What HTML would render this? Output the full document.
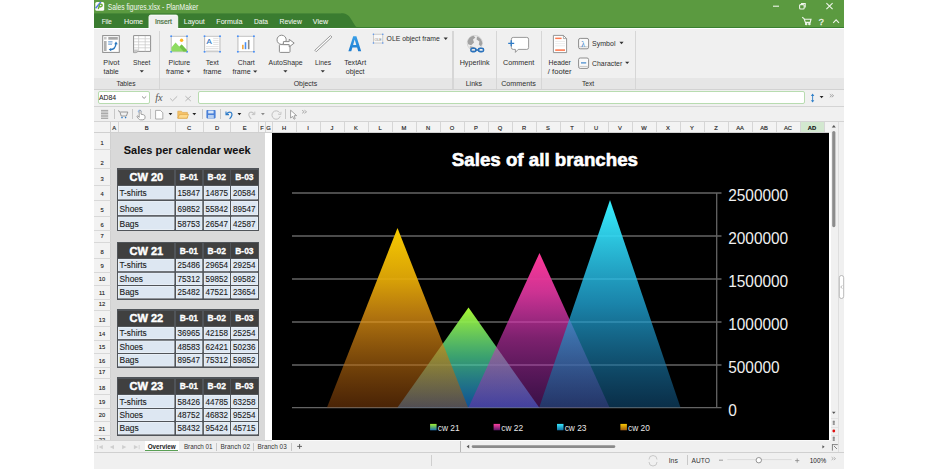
<!DOCTYPE html>
<html><head><meta charset="utf-8"><style>
*{margin:0;padding:0;box-sizing:border-box}
html,body{width:938px;height:469px;overflow:hidden;background:#fff}
body{position:relative;font-family:"Liberation Sans",sans-serif}
.a{position:absolute}
svg{position:absolute;overflow:visible}
</style></head><body>
<div class="a" style="left:94px;top:0px;width:750px;height:28px;background:#5b9a40"></div>
<div class="a" style="left:94px;top:27.0px;width:750px;height:1.1px;background:#3a8030"></div>
<div class="a" style="left:94px;top:28px;width:750px;height:62px;background:#f0f0f0"></div>
<div class="a" style="left:94px;top:28.1px;width:750px;height:1.2px;background:#ffffff"></div>
<div class="a" style="left:94px;top:78.4px;width:750px;height:10.2px;background:#e6e6e6"></div>
<div class="a" style="left:158.9px;top:31px;width:1.4px;height:58px;background:#d6d6d6"></div>
<div class="a" style="left:452.3px;top:31px;width:1.4px;height:58px;background:#d6d6d6"></div>
<div class="a" style="left:495.8px;top:31px;width:1.4px;height:58px;background:#d6d6d6"></div>
<div class="a" style="left:540.8px;top:31px;width:1.4px;height:58px;background:#d6d6d6"></div>
<div class="a" style="left:634.6999999999999px;top:31px;width:1.4px;height:58px;background:#d6d6d6"></div>
<div class="a" style="left:94px;top:89px;width:750px;height:1px;background:#d2d2d2"></div>
<div class="a" style="left:94px;top:90px;width:750px;height:16px;background:#f0f0f0"></div>
<div class="a" style="left:94px;top:105.8px;width:750px;height:1px;background:#d4d4d4"></div>
<div class="a" style="left:97.5px;top:91.4px;width:52.6px;height:12.5px;background:#fff;border:1px solid #b8dcb0;border-radius:2px"></div>
<div class="a" style="left:198.4px;top:91.3px;width:606.6px;height:12.6px;background:#fff;border:1px solid #b8dcb0;border-radius:2px"></div>
<div class="a" style="left:94px;top:107px;width:750px;height:14px;background:#f0f0f0"></div>
<div class="a" style="left:94px;top:121px;width:750px;height:1px;background:#d4d4d4"></div>
<div class="a" style="left:94px;top:122px;width:737px;height:10.6px;background:#f3f3f3"></div>
<div class="a" style="left:94px;top:132.3px;width:735px;height:0.9px;background:#d0d0d0"></div>
<div class="a" style="left:800.4px;top:122.3px;width:24px;height:10px;background:#d3e8d0"></div>
<div class="a" style="left:110.0px;top:122.3px;width:0.8px;height:10.2px;background:#d6d6d6"></div>
<div class="a" style="left:117.5px;top:122.3px;width:0.8px;height:10.2px;background:#d6d6d6"></div>
<div class="a" style="left:174.9px;top:122.3px;width:0.8px;height:10.2px;background:#d6d6d6"></div>
<div class="a" style="left:202.79999999999998px;top:122.3px;width:0.8px;height:10.2px;background:#d6d6d6"></div>
<div class="a" style="left:230.4px;top:122.3px;width:0.8px;height:10.2px;background:#d6d6d6"></div>
<div class="a" style="left:258.20000000000005px;top:122.3px;width:0.8px;height:10.2px;background:#d6d6d6"></div>
<div class="a" style="left:264.70000000000005px;top:122.3px;width:0.8px;height:10.2px;background:#d6d6d6"></div>
<div class="a" style="left:271.6px;top:122.3px;width:0.8px;height:10.2px;background:#d6d6d6"></div>
<div class="a" style="left:295.6px;top:122.3px;width:0.8px;height:10.2px;background:#d6d6d6"></div>
<div class="a" style="left:319.6px;top:122.3px;width:0.8px;height:10.2px;background:#d6d6d6"></div>
<div class="a" style="left:343.6px;top:122.3px;width:0.8px;height:10.2px;background:#d6d6d6"></div>
<div class="a" style="left:367.6px;top:122.3px;width:0.8px;height:10.2px;background:#d6d6d6"></div>
<div class="a" style="left:391.6px;top:122.3px;width:0.8px;height:10.2px;background:#d6d6d6"></div>
<div class="a" style="left:415.6px;top:122.3px;width:0.8px;height:10.2px;background:#d6d6d6"></div>
<div class="a" style="left:439.6px;top:122.3px;width:0.8px;height:10.2px;background:#d6d6d6"></div>
<div class="a" style="left:463.6px;top:122.3px;width:0.8px;height:10.2px;background:#d6d6d6"></div>
<div class="a" style="left:487.6px;top:122.3px;width:0.8px;height:10.2px;background:#d6d6d6"></div>
<div class="a" style="left:511.6px;top:122.3px;width:0.8px;height:10.2px;background:#d6d6d6"></div>
<div class="a" style="left:535.6px;top:122.3px;width:0.8px;height:10.2px;background:#d6d6d6"></div>
<div class="a" style="left:559.6px;top:122.3px;width:0.8px;height:10.2px;background:#d6d6d6"></div>
<div class="a" style="left:583.6px;top:122.3px;width:0.8px;height:10.2px;background:#d6d6d6"></div>
<div class="a" style="left:607.6px;top:122.3px;width:0.8px;height:10.2px;background:#d6d6d6"></div>
<div class="a" style="left:631.6px;top:122.3px;width:0.8px;height:10.2px;background:#d6d6d6"></div>
<div class="a" style="left:655.6px;top:122.3px;width:0.8px;height:10.2px;background:#d6d6d6"></div>
<div class="a" style="left:679.6px;top:122.3px;width:0.8px;height:10.2px;background:#d6d6d6"></div>
<div class="a" style="left:703.6px;top:122.3px;width:0.8px;height:10.2px;background:#d6d6d6"></div>
<div class="a" style="left:727.6px;top:122.3px;width:0.8px;height:10.2px;background:#d6d6d6"></div>
<div class="a" style="left:751.6px;top:122.3px;width:0.8px;height:10.2px;background:#d6d6d6"></div>
<div class="a" style="left:775.6px;top:122.3px;width:0.8px;height:10.2px;background:#d6d6d6"></div>
<div class="a" style="left:799.6px;top:122.3px;width:0.8px;height:10.2px;background:#d6d6d6"></div>
<div class="a" style="left:823.6px;top:122.3px;width:0.8px;height:10.2px;background:#d6d6d6"></div>
<div class="a" style="left:94px;top:133px;width:16px;height:307px;background:#f2f2f2"></div>
<div class="a" style="left:109.9px;top:122.3px;width:0.9px;height:318px;background:#d0d0d0"></div>
<div class="a" style="left:94px;top:148.6px;width:16.6px;height:0.8px;background:#d8d8d8"></div>
<div class="a" style="left:94px;top:168.4px;width:16.6px;height:0.8px;background:#d8d8d8"></div>
<div class="a" style="left:94px;top:185.0px;width:16.6px;height:0.8px;background:#d8d8d8"></div>
<div class="a" style="left:94px;top:199.79999999999998px;width:16.6px;height:0.8px;background:#d8d8d8"></div>
<div class="a" style="left:94px;top:215.5px;width:16.6px;height:0.8px;background:#d8d8d8"></div>
<div class="a" style="left:94px;top:230.29999999999998px;width:16.6px;height:0.8px;background:#d8d8d8"></div>
<div class="a" style="left:94px;top:242.1px;width:16.6px;height:0.8px;background:#d8d8d8"></div>
<div class="a" style="left:94px;top:258.1px;width:16.6px;height:0.8px;background:#d8d8d8"></div>
<div class="a" style="left:94px;top:271.6px;width:16.6px;height:0.8px;background:#d8d8d8"></div>
<div class="a" style="left:94px;top:285.20000000000005px;width:16.6px;height:0.8px;background:#d8d8d8"></div>
<div class="a" style="left:94px;top:298.8px;width:16.6px;height:0.8px;background:#d8d8d8"></div>
<div class="a" style="left:94px;top:309.5px;width:16.6px;height:0.8px;background:#d8d8d8"></div>
<div class="a" style="left:94px;top:326.20000000000005px;width:16.6px;height:0.8px;background:#d8d8d8"></div>
<div class="a" style="left:94px;top:339.5px;width:16.6px;height:0.8px;background:#d8d8d8"></div>
<div class="a" style="left:94px;top:353.0px;width:16.6px;height:0.8px;background:#d8d8d8"></div>
<div class="a" style="left:94px;top:366.8px;width:16.6px;height:0.8px;background:#d8d8d8"></div>
<div class="a" style="left:94px;top:377.8px;width:16.6px;height:0.8px;background:#d8d8d8"></div>
<div class="a" style="left:94px;top:394.1px;width:16.6px;height:0.8px;background:#d8d8d8"></div>
<div class="a" style="left:94px;top:408.1px;width:16.6px;height:0.8px;background:#d8d8d8"></div>
<div class="a" style="left:94px;top:421.20000000000005px;width:16.6px;height:0.8px;background:#d8d8d8"></div>
<div class="a" style="left:94px;top:434.8px;width:16.6px;height:0.8px;background:#d8d8d8"></div>
<div class="a" style="left:110.8px;top:133.2px;width:154.3px;height:306.8px;background:#d9d9d9"></div>
<div class="a" style="left:265.1px;top:133.2px;width:6.5px;height:306.8px;background:#ffffff"></div>
<div class="a" style="left:271.6px;top:133.0px;width:557.8px;height:307.1px;background:#000"></div>
<div class="a" style="left:829.4px;top:133.0px;width:14.600000000000023px;height:319px;background:#ffffff"></div>
<div class="a" style="left:831px;top:122.3px;width:13px;height:330px;background:#f0f0f0"></div>
<div class="a" style="left:838.4px;top:122.3px;width:0.8px;height:330px;background:#dedede"></div>
<div class="a" style="left:94px;top:440.1px;width:750px;height:12.4px;background:#f0f0f0"></div>
<div class="a" style="left:271.6px;top:440.1px;width:558px;height:0.9px;background:#fafafa"></div>
<div class="a" style="left:94px;top:440.0px;width:177.5px;height:0.8px;background:#d4d4d4"></div>
<div class="a" style="left:145px;top:440.6px;width:33.7px;height:10.7px;background:#ffffff"></div>
<div class="a" style="left:145.3px;top:450.2px;width:33.2px;height:1.3px;background:#5aa055"></div>
<div class="a" style="left:94px;top:452.3px;width:750px;height:16.69999999999999px;background:#f0f0f0"></div>
<div class="a" style="left:94px;top:452.1px;width:750px;height:1px;background:#d0d0d0"></div>
<div class="a" style="left:838.4px;top:440px;width:0.8px;height:12.2px;background:#dedede"></div>
<div class="a" style="left:831.2px;top:418.2px;width:7px;height:0.7px;background:#e2e2e2"></div>
<div class="a" style="left:831.2px;top:427.2px;width:7px;height:0.7px;background:#e2e2e2"></div>
<div class="a" style="left:831.2px;top:435.2px;width:7px;height:0.7px;background:#e2e2e2"></div>
<div class="a" style="left:117.5px;top:169.0px;width:141.2px;height:16.400000000000006px;background:#404040"></div>
<div class="a" style="left:117.5px;top:185.4px;width:141.2px;height:45.29999999999998px;background:#dde7f2"></div>
<div class="a" style="left:116.75px;top:168.25px;width:142.7px;height:1.5px;background:#505459"></div>
<div class="a" style="left:116.75px;top:184.65px;width:142.7px;height:1.5px;background:#505459"></div>
<div class="a" style="left:116.75px;top:199.45px;width:142.7px;height:1.5px;background:#505459"></div>
<div class="a" style="left:116.75px;top:215.15px;width:142.7px;height:1.5px;background:#505459"></div>
<div class="a" style="left:116.75px;top:229.95px;width:142.7px;height:1.5px;background:#505459"></div>
<div class="a" style="left:116.75px;top:168.25px;width:1.5px;height:63.19999999999999px;background:#505459"></div>
<div class="a" style="left:174.45px;top:168.25px;width:1.5px;height:63.19999999999999px;background:#505459"></div>
<div class="a" style="left:202.35px;top:168.25px;width:1.5px;height:63.19999999999999px;background:#505459"></div>
<div class="a" style="left:229.95px;top:168.25px;width:1.5px;height:63.19999999999999px;background:#505459"></div>
<div class="a" style="left:257.95px;top:168.25px;width:1.5px;height:63.19999999999999px;background:#505459"></div>
<div class="a" style="left:117.5px;top:242.5px;width:141.2px;height:16.0px;background:#404040"></div>
<div class="a" style="left:117.5px;top:258.5px;width:141.2px;height:40.69999999999999px;background:#dde7f2"></div>
<div class="a" style="left:116.75px;top:241.75px;width:142.7px;height:1.5px;background:#505459"></div>
<div class="a" style="left:116.75px;top:257.75px;width:142.7px;height:1.5px;background:#505459"></div>
<div class="a" style="left:116.75px;top:271.25px;width:142.7px;height:1.5px;background:#505459"></div>
<div class="a" style="left:116.75px;top:284.85px;width:142.7px;height:1.5px;background:#505459"></div>
<div class="a" style="left:116.75px;top:298.45px;width:142.7px;height:1.5px;background:#505459"></div>
<div class="a" style="left:116.75px;top:241.75px;width:1.5px;height:58.19999999999999px;background:#505459"></div>
<div class="a" style="left:174.45px;top:241.75px;width:1.5px;height:58.19999999999999px;background:#505459"></div>
<div class="a" style="left:202.35px;top:241.75px;width:1.5px;height:58.19999999999999px;background:#505459"></div>
<div class="a" style="left:229.95px;top:241.75px;width:1.5px;height:58.19999999999999px;background:#505459"></div>
<div class="a" style="left:257.95px;top:241.75px;width:1.5px;height:58.19999999999999px;background:#505459"></div>
<div class="a" style="left:117.5px;top:309.9px;width:141.2px;height:16.700000000000045px;background:#404040"></div>
<div class="a" style="left:117.5px;top:326.6px;width:141.2px;height:40.599999999999966px;background:#dde7f2"></div>
<div class="a" style="left:116.75px;top:309.15px;width:142.7px;height:1.5px;background:#505459"></div>
<div class="a" style="left:116.75px;top:325.85px;width:142.7px;height:1.5px;background:#505459"></div>
<div class="a" style="left:116.75px;top:339.15px;width:142.7px;height:1.5px;background:#505459"></div>
<div class="a" style="left:116.75px;top:352.65px;width:142.7px;height:1.5px;background:#505459"></div>
<div class="a" style="left:116.75px;top:366.45px;width:142.7px;height:1.5px;background:#505459"></div>
<div class="a" style="left:116.75px;top:309.15px;width:1.5px;height:58.80000000000001px;background:#505459"></div>
<div class="a" style="left:174.45px;top:309.15px;width:1.5px;height:58.80000000000001px;background:#505459"></div>
<div class="a" style="left:202.35px;top:309.15px;width:1.5px;height:58.80000000000001px;background:#505459"></div>
<div class="a" style="left:229.95px;top:309.15px;width:1.5px;height:58.80000000000001px;background:#505459"></div>
<div class="a" style="left:257.95px;top:309.15px;width:1.5px;height:58.80000000000001px;background:#505459"></div>
<div class="a" style="left:117.5px;top:378.2px;width:141.2px;height:16.30000000000001px;background:#404040"></div>
<div class="a" style="left:117.5px;top:394.5px;width:141.2px;height:40.69999999999999px;background:#dde7f2"></div>
<div class="a" style="left:116.75px;top:377.45px;width:142.7px;height:1.5px;background:#505459"></div>
<div class="a" style="left:116.75px;top:393.75px;width:142.7px;height:1.5px;background:#505459"></div>
<div class="a" style="left:116.75px;top:407.75px;width:142.7px;height:1.5px;background:#505459"></div>
<div class="a" style="left:116.75px;top:420.85px;width:142.7px;height:1.5px;background:#505459"></div>
<div class="a" style="left:116.75px;top:434.45px;width:142.7px;height:1.5px;background:#505459"></div>
<div class="a" style="left:116.75px;top:377.45px;width:1.5px;height:58.5px;background:#505459"></div>
<div class="a" style="left:174.45px;top:377.45px;width:1.5px;height:58.5px;background:#505459"></div>
<div class="a" style="left:202.35px;top:377.45px;width:1.5px;height:58.5px;background:#505459"></div>
<div class="a" style="left:229.95px;top:377.45px;width:1.5px;height:58.5px;background:#505459"></div>
<div class="a" style="left:257.95px;top:377.45px;width:1.5px;height:58.5px;background:#505459"></div>
<div class="a" style="left:216.29999999999998px;top:442.5px;width:0.8px;height:8.5px;background:#c8c8c8"></div>
<div class="a" style="left:253.1px;top:442.5px;width:0.8px;height:8.5px;background:#c8c8c8"></div>
<div class="a" style="left:290.5px;top:442.5px;width:0.8px;height:8.5px;background:#c8c8c8"></div>
<div class="a" style="left:460.4px;top:440.6px;width:0.9px;height:11.5px;background:#b8b8b8"></div>
<div class="a" style="left:431.2px;top:455.4px;width:0.9px;height:10.6px;background:#cfcfcf"></div>
<div class="a" style="left:687.2px;top:455.3px;width:0.9px;height:10px;background:#c8c8c8"></div>
<div class="a" style="left:113.89999999999999px;top:109.2px;width:0.8px;height:10.2px;background:#c8c8c8"></div>
<div class="a" style="left:132.0px;top:109.2px;width:0.8px;height:10.2px;background:#c8c8c8"></div>
<div class="a" style="left:150.2px;top:109.2px;width:0.8px;height:10.2px;background:#c8c8c8"></div>
<div class="a" style="left:201.5px;top:109.2px;width:0.8px;height:10.2px;background:#c8c8c8"></div>
<div class="a" style="left:220.2px;top:109.2px;width:0.8px;height:10.2px;background:#c8c8c8"></div>
<div class="a" style="left:285.20000000000005px;top:109.2px;width:0.8px;height:10.2px;background:#c8c8c8"></div>
<svg style="left:0;top:0" width="938" height="469" viewBox="0 0 938 469">
<path d="M94 13.2H341C346 13.2 349 15 351 19L355 25.5C356 27 357 27.6 359 27.6V28H94Z" fill="#3a7c30"/>
<path d="M94 13.6H341" stroke="#4a8a3a" stroke-width="0.8"/>
<path d="M149 29V16.8Q149 15.1 150.7 15.1H176Q177.7 15.1 177.7 16.8V29Z" fill="#f0f0f0" stroke="#ffffff" stroke-width="0.9"/>
<rect x="149.6" y="27.5" width="27.5" height="2.5" fill="#f0f0f0"/>
<rect x="118.6" y="186.5" width="55.499999999999986" height="12.599999999999984" fill="none" stroke="#eef3f9" stroke-width="0.6"/>
<rect x="176.29999999999998" y="186.5" width="25.700000000000006" height="12.599999999999984" fill="none" stroke="#eef3f9" stroke-width="0.6"/>
<rect x="204.2" y="186.5" width="25.399999999999995" height="12.599999999999984" fill="none" stroke="#eef3f9" stroke-width="0.6"/>
<rect x="231.79999999999998" y="186.5" width="25.8" height="12.599999999999984" fill="none" stroke="#eef3f9" stroke-width="0.6"/>
<rect x="118.6" y="201.29999999999998" width="55.499999999999986" height="13.500000000000018" fill="none" stroke="#eef3f9" stroke-width="0.6"/>
<rect x="176.29999999999998" y="201.29999999999998" width="25.700000000000006" height="13.500000000000018" fill="none" stroke="#eef3f9" stroke-width="0.6"/>
<rect x="204.2" y="201.29999999999998" width="25.399999999999995" height="13.500000000000018" fill="none" stroke="#eef3f9" stroke-width="0.6"/>
<rect x="231.79999999999998" y="201.29999999999998" width="25.8" height="13.500000000000018" fill="none" stroke="#eef3f9" stroke-width="0.6"/>
<rect x="118.6" y="217.0" width="55.499999999999986" height="12.599999999999984" fill="none" stroke="#eef3f9" stroke-width="0.6"/>
<rect x="176.29999999999998" y="217.0" width="25.700000000000006" height="12.599999999999984" fill="none" stroke="#eef3f9" stroke-width="0.6"/>
<rect x="204.2" y="217.0" width="25.399999999999995" height="12.599999999999984" fill="none" stroke="#eef3f9" stroke-width="0.6"/>
<rect x="231.79999999999998" y="217.0" width="25.8" height="12.599999999999984" fill="none" stroke="#eef3f9" stroke-width="0.6"/>
<rect x="118.6" y="259.6" width="55.499999999999986" height="11.3" fill="none" stroke="#eef3f9" stroke-width="0.6"/>
<rect x="176.29999999999998" y="259.6" width="25.700000000000006" height="11.3" fill="none" stroke="#eef3f9" stroke-width="0.6"/>
<rect x="204.2" y="259.6" width="25.399999999999995" height="11.3" fill="none" stroke="#eef3f9" stroke-width="0.6"/>
<rect x="231.79999999999998" y="259.6" width="25.8" height="11.3" fill="none" stroke="#eef3f9" stroke-width="0.6"/>
<rect x="118.6" y="273.1" width="55.499999999999986" height="11.400000000000023" fill="none" stroke="#eef3f9" stroke-width="0.6"/>
<rect x="176.29999999999998" y="273.1" width="25.700000000000006" height="11.400000000000023" fill="none" stroke="#eef3f9" stroke-width="0.6"/>
<rect x="204.2" y="273.1" width="25.399999999999995" height="11.400000000000023" fill="none" stroke="#eef3f9" stroke-width="0.6"/>
<rect x="231.79999999999998" y="273.1" width="25.8" height="11.400000000000023" fill="none" stroke="#eef3f9" stroke-width="0.6"/>
<rect x="118.6" y="286.70000000000005" width="55.499999999999986" height="11.399999999999967" fill="none" stroke="#eef3f9" stroke-width="0.6"/>
<rect x="176.29999999999998" y="286.70000000000005" width="25.700000000000006" height="11.399999999999967" fill="none" stroke="#eef3f9" stroke-width="0.6"/>
<rect x="204.2" y="286.70000000000005" width="25.399999999999995" height="11.399999999999967" fill="none" stroke="#eef3f9" stroke-width="0.6"/>
<rect x="231.79999999999998" y="286.70000000000005" width="25.8" height="11.399999999999967" fill="none" stroke="#eef3f9" stroke-width="0.6"/>
<rect x="118.6" y="327.70000000000005" width="55.499999999999986" height="11.099999999999955" fill="none" stroke="#eef3f9" stroke-width="0.6"/>
<rect x="176.29999999999998" y="327.70000000000005" width="25.700000000000006" height="11.099999999999955" fill="none" stroke="#eef3f9" stroke-width="0.6"/>
<rect x="204.2" y="327.70000000000005" width="25.399999999999995" height="11.099999999999955" fill="none" stroke="#eef3f9" stroke-width="0.6"/>
<rect x="231.79999999999998" y="327.70000000000005" width="25.8" height="11.099999999999955" fill="none" stroke="#eef3f9" stroke-width="0.6"/>
<rect x="118.6" y="341.0" width="55.499999999999986" height="11.3" fill="none" stroke="#eef3f9" stroke-width="0.6"/>
<rect x="176.29999999999998" y="341.0" width="25.700000000000006" height="11.3" fill="none" stroke="#eef3f9" stroke-width="0.6"/>
<rect x="204.2" y="341.0" width="25.399999999999995" height="11.3" fill="none" stroke="#eef3f9" stroke-width="0.6"/>
<rect x="231.79999999999998" y="341.0" width="25.8" height="11.3" fill="none" stroke="#eef3f9" stroke-width="0.6"/>
<rect x="118.6" y="354.5" width="55.499999999999986" height="11.600000000000012" fill="none" stroke="#eef3f9" stroke-width="0.6"/>
<rect x="176.29999999999998" y="354.5" width="25.700000000000006" height="11.600000000000012" fill="none" stroke="#eef3f9" stroke-width="0.6"/>
<rect x="204.2" y="354.5" width="25.399999999999995" height="11.600000000000012" fill="none" stroke="#eef3f9" stroke-width="0.6"/>
<rect x="231.79999999999998" y="354.5" width="25.8" height="11.600000000000012" fill="none" stroke="#eef3f9" stroke-width="0.6"/>
<rect x="118.6" y="395.6" width="55.499999999999986" height="11.8" fill="none" stroke="#eef3f9" stroke-width="0.6"/>
<rect x="176.29999999999998" y="395.6" width="25.700000000000006" height="11.8" fill="none" stroke="#eef3f9" stroke-width="0.6"/>
<rect x="204.2" y="395.6" width="25.399999999999995" height="11.8" fill="none" stroke="#eef3f9" stroke-width="0.6"/>
<rect x="231.79999999999998" y="395.6" width="25.8" height="11.8" fill="none" stroke="#eef3f9" stroke-width="0.6"/>
<rect x="118.6" y="409.6" width="55.499999999999986" height="10.900000000000023" fill="none" stroke="#eef3f9" stroke-width="0.6"/>
<rect x="176.29999999999998" y="409.6" width="25.700000000000006" height="10.900000000000023" fill="none" stroke="#eef3f9" stroke-width="0.6"/>
<rect x="204.2" y="409.6" width="25.399999999999995" height="10.900000000000023" fill="none" stroke="#eef3f9" stroke-width="0.6"/>
<rect x="231.79999999999998" y="409.6" width="25.8" height="10.900000000000023" fill="none" stroke="#eef3f9" stroke-width="0.6"/>
<rect x="118.6" y="422.70000000000005" width="55.499999999999986" height="11.399999999999967" fill="none" stroke="#eef3f9" stroke-width="0.6"/>
<rect x="176.29999999999998" y="422.70000000000005" width="25.700000000000006" height="11.399999999999967" fill="none" stroke="#eef3f9" stroke-width="0.6"/>
<rect x="204.2" y="422.70000000000005" width="25.399999999999995" height="11.399999999999967" fill="none" stroke="#eef3f9" stroke-width="0.6"/>
<rect x="231.79999999999998" y="422.70000000000005" width="25.8" height="11.399999999999967" fill="none" stroke="#eef3f9" stroke-width="0.6"/>
<path d="M186.4 70.39999999999999H190.6L188.5 72.8Z" fill="#333"/>
<path d="M139.70000000000002 70.2H143.9L141.8 72.60000000000001Z" fill="#333"/>
<path d="M253.1 70.39999999999999H257.3L255.2 72.8Z" fill="#333"/>
<path d="M283.29999999999995 70.2H287.5L285.4 72.60000000000001Z" fill="#333"/>
<path d="M320.7 70.2H324.90000000000003L322.8 72.60000000000001Z" fill="#333"/>
<path d="M443.59999999999997 37.599999999999994H447.8L445.7 40.0Z" fill="#333"/>
<path d="M619.4 41.8H623.6L621.5 44.2Z" fill="#333"/>
<path d="M625.1 61.699999999999996H629.3000000000001L627.2 64.1Z" fill="#333"/>
<path d="M142 96.4L144.1 98.4L146.2 96.4" fill="none" stroke="#777" stroke-width="0.8"/>
<path d="M170.2 98.5L172.6 100.8L177.2 96.3" fill="none" stroke="#b0b0b0" stroke-width="0.9"/>
<path d="M185.4 96.2L190.8 101M190.8 96.2L185.4 101" fill="none" stroke="#b0b0b0" stroke-width="0.9"/>
<path d="M812.6 94.5V101.5" stroke="#2f7fc8" stroke-width="0.9"/><path d="M810.9 96H814.3L812.6 93.6Z M810.9 100.2H814.3L812.6 102.6Z" fill="#2f7fc8"/>
<path d="M819.7 96.10000000000001H823.5L821.6 98.3Z" fill="#222"/>
<path d="M829.8 94.2L831.6 95.7L829.8 97.2M831.8 94.2L833.6 95.7L831.8 97.2" fill="none" stroke="#888" stroke-width="0.7"/>
<text x="114.2" y="129.6" font-size="5.8" fill="#222" stroke="#222" stroke-width="0.15" font-family="Liberation Sans" text-anchor="middle" font-weight="normal">A</text>
<text x="146.6" y="129.6" font-size="5.8" fill="#222" stroke="#222" stroke-width="0.15" font-family="Liberation Sans" text-anchor="middle" font-weight="normal">B</text>
<text x="189.2" y="129.6" font-size="5.8" fill="#222" stroke="#222" stroke-width="0.15" font-family="Liberation Sans" text-anchor="middle" font-weight="normal">C</text>
<text x="217.0" y="129.6" font-size="5.8" fill="#222" stroke="#222" stroke-width="0.15" font-family="Liberation Sans" text-anchor="middle" font-weight="normal">D</text>
<text x="244.7" y="129.6" font-size="5.8" fill="#222" stroke="#222" stroke-width="0.15" font-family="Liberation Sans" text-anchor="middle" font-weight="normal">E</text>
<text x="261.9" y="129.6" font-size="5.8" fill="#222" stroke="#222" stroke-width="0.15" font-family="Liberation Sans" text-anchor="middle" font-weight="normal">F</text>
<text x="268.6" y="129.6" font-size="5.8" fill="#222" stroke="#222" stroke-width="0.15" font-family="Liberation Sans" text-anchor="middle" font-weight="normal">G</text>
<text x="284.0" y="129.6" font-size="5.8" fill="#222" stroke="#222" stroke-width="0.15" font-family="Liberation Sans" text-anchor="middle" font-weight="normal">H</text>
<text x="308.0" y="129.6" font-size="5.8" fill="#222" stroke="#222" stroke-width="0.15" font-family="Liberation Sans" text-anchor="middle" font-weight="normal">I</text>
<text x="332.0" y="129.6" font-size="5.8" fill="#222" stroke="#222" stroke-width="0.15" font-family="Liberation Sans" text-anchor="middle" font-weight="normal">J</text>
<text x="356.0" y="129.6" font-size="5.8" fill="#222" stroke="#222" stroke-width="0.15" font-family="Liberation Sans" text-anchor="middle" font-weight="normal">K</text>
<text x="380.0" y="129.6" font-size="5.8" fill="#222" stroke="#222" stroke-width="0.15" font-family="Liberation Sans" text-anchor="middle" font-weight="normal">L</text>
<text x="404.0" y="129.6" font-size="5.8" fill="#222" stroke="#222" stroke-width="0.15" font-family="Liberation Sans" text-anchor="middle" font-weight="normal">M</text>
<text x="428.0" y="129.6" font-size="5.8" fill="#222" stroke="#222" stroke-width="0.15" font-family="Liberation Sans" text-anchor="middle" font-weight="normal">N</text>
<text x="452.0" y="129.6" font-size="5.8" fill="#222" stroke="#222" stroke-width="0.15" font-family="Liberation Sans" text-anchor="middle" font-weight="normal">O</text>
<text x="476.0" y="129.6" font-size="5.8" fill="#222" stroke="#222" stroke-width="0.15" font-family="Liberation Sans" text-anchor="middle" font-weight="normal">P</text>
<text x="500.0" y="129.6" font-size="5.8" fill="#222" stroke="#222" stroke-width="0.15" font-family="Liberation Sans" text-anchor="middle" font-weight="normal">Q</text>
<text x="524.0" y="129.6" font-size="5.8" fill="#222" stroke="#222" stroke-width="0.15" font-family="Liberation Sans" text-anchor="middle" font-weight="normal">R</text>
<text x="548.0" y="129.6" font-size="5.8" fill="#222" stroke="#222" stroke-width="0.15" font-family="Liberation Sans" text-anchor="middle" font-weight="normal">S</text>
<text x="572.0" y="129.6" font-size="5.8" fill="#222" stroke="#222" stroke-width="0.15" font-family="Liberation Sans" text-anchor="middle" font-weight="normal">T</text>
<text x="596.0" y="129.6" font-size="5.8" fill="#222" stroke="#222" stroke-width="0.15" font-family="Liberation Sans" text-anchor="middle" font-weight="normal">U</text>
<text x="620.0" y="129.6" font-size="5.8" fill="#222" stroke="#222" stroke-width="0.15" font-family="Liberation Sans" text-anchor="middle" font-weight="normal">V</text>
<text x="644.0" y="129.6" font-size="5.8" fill="#222" stroke="#222" stroke-width="0.15" font-family="Liberation Sans" text-anchor="middle" font-weight="normal">W</text>
<text x="668.0" y="129.6" font-size="5.8" fill="#222" stroke="#222" stroke-width="0.15" font-family="Liberation Sans" text-anchor="middle" font-weight="normal">X</text>
<text x="692.0" y="129.6" font-size="5.8" fill="#222" stroke="#222" stroke-width="0.15" font-family="Liberation Sans" text-anchor="middle" font-weight="normal">Y</text>
<text x="716.0" y="129.6" font-size="5.8" fill="#222" stroke="#222" stroke-width="0.15" font-family="Liberation Sans" text-anchor="middle" font-weight="normal">Z</text>
<text x="740.0" y="129.6" font-size="5.8" fill="#222" stroke="#222" stroke-width="0.15" font-family="Liberation Sans" text-anchor="middle" font-weight="normal">AA</text>
<text x="764.0" y="129.6" font-size="5.8" fill="#222" stroke="#222" stroke-width="0.15" font-family="Liberation Sans" text-anchor="middle" font-weight="normal">AB</text>
<text x="788.0" y="129.6" font-size="5.8" fill="#222" stroke="#222" stroke-width="0.15" font-family="Liberation Sans" text-anchor="middle" font-weight="normal">AC</text>
<text x="812.0" y="129.6" font-size="5.8" fill="#111" stroke="#111" stroke-width="0.15" font-family="Liberation Sans" text-anchor="middle" font-weight="bold">AD</text>
<text x="102" y="144.8" font-size="5.8" fill="#222" stroke="#222" stroke-width="0.12" font-family="Liberation Sans" text-anchor="middle">1</text>
<text x="102" y="164.6" font-size="5.8" fill="#222" stroke="#222" stroke-width="0.12" font-family="Liberation Sans" text-anchor="middle">2</text>
<text x="102" y="181.2" font-size="5.8" fill="#222" stroke="#222" stroke-width="0.12" font-family="Liberation Sans" text-anchor="middle">3</text>
<text x="102" y="196.0" font-size="5.8" fill="#222" stroke="#222" stroke-width="0.12" font-family="Liberation Sans" text-anchor="middle">4</text>
<text x="102" y="211.7" font-size="5.8" fill="#222" stroke="#222" stroke-width="0.12" font-family="Liberation Sans" text-anchor="middle">5</text>
<text x="102" y="226.5" font-size="5.8" fill="#222" stroke="#222" stroke-width="0.12" font-family="Liberation Sans" text-anchor="middle">6</text>
<text x="102" y="238.3" font-size="5.8" fill="#222" stroke="#222" stroke-width="0.12" font-family="Liberation Sans" text-anchor="middle">7</text>
<text x="102" y="254.3" font-size="5.8" fill="#222" stroke="#222" stroke-width="0.12" font-family="Liberation Sans" text-anchor="middle">8</text>
<text x="102" y="267.8" font-size="5.8" fill="#222" stroke="#222" stroke-width="0.12" font-family="Liberation Sans" text-anchor="middle">9</text>
<text x="102" y="281.4" font-size="5.8" fill="#222" stroke="#222" stroke-width="0.12" font-family="Liberation Sans" text-anchor="middle">10</text>
<text x="102" y="295.0" font-size="5.8" fill="#222" stroke="#222" stroke-width="0.12" font-family="Liberation Sans" text-anchor="middle">11</text>
<text x="102" y="305.7" font-size="5.8" fill="#222" stroke="#222" stroke-width="0.12" font-family="Liberation Sans" text-anchor="middle">12</text>
<text x="102" y="322.4" font-size="5.8" fill="#222" stroke="#222" stroke-width="0.12" font-family="Liberation Sans" text-anchor="middle">13</text>
<text x="102" y="335.7" font-size="5.8" fill="#222" stroke="#222" stroke-width="0.12" font-family="Liberation Sans" text-anchor="middle">14</text>
<text x="102" y="349.2" font-size="5.8" fill="#222" stroke="#222" stroke-width="0.12" font-family="Liberation Sans" text-anchor="middle">15</text>
<text x="102" y="363.0" font-size="5.8" fill="#222" stroke="#222" stroke-width="0.12" font-family="Liberation Sans" text-anchor="middle">16</text>
<text x="102" y="374.0" font-size="5.8" fill="#222" stroke="#222" stroke-width="0.12" font-family="Liberation Sans" text-anchor="middle">17</text>
<text x="102" y="390.3" font-size="5.8" fill="#222" stroke="#222" stroke-width="0.12" font-family="Liberation Sans" text-anchor="middle">18</text>
<text x="102" y="404.3" font-size="5.8" fill="#222" stroke="#222" stroke-width="0.12" font-family="Liberation Sans" text-anchor="middle">19</text>
<text x="102" y="417.4" font-size="5.8" fill="#222" stroke="#222" stroke-width="0.12" font-family="Liberation Sans" text-anchor="middle">20</text>
<text x="102" y="431.0" font-size="5.8" fill="#222" stroke="#222" stroke-width="0.12" font-family="Liberation Sans" text-anchor="middle">21</text>
<path d="M297.2 446.4H302M299.6 444V448.8" stroke="#555" stroke-width="0.9"/>
<g fill="#cfcfcf"><path d="M97.6 445V449.2" stroke="#cfcfcf" stroke-width="0.8"/><path d="M102.8 445L98.6 447.1L102.8 449.2Z"/><path d="M114 445L109.8 447.1L114 449.2Z"/><path d="M122.1 445L126.3 447.1L122.1 449.2Z"/><path d="M133.9 445L138.1 447.1L133.9 449.2Z"/><path d="M139.2 445V449.2" stroke="#cfcfcf" stroke-width="0.8"/></g>
<path d="M469.2 444.8L466.6 446.6L469.2 448.4Z" fill="#555"/>
<path d="M473 446.6H614" stroke="#8a8a8a" stroke-width="2.6" stroke-linecap="round"/>
<path d="M822.4 445.2L824.6 446.8L822.4 448.4Z" fill="#555"/>
<path d="M719 460.2H723" stroke="#888" stroke-width="0.8"/>
<path d="M727.4 459.6H791.6" stroke="#d4d4d4" stroke-width="0.8"/>
<circle cx="758.8" cy="460.2" r="2.7" fill="#fff" stroke="#888" stroke-width="0.9"/>
<path d="M795.1 460.6H799.3M797.2 458.5V462.7" stroke="#888" stroke-width="0.8"/>
<path d="M831.6 457.2L833.3 458.6L831.6 460M833.8 457.2L835.5 458.6L833.8 460" fill="none" stroke="#999" stroke-width="0.7"/>
<g fill="none" stroke="#c4c4c4" stroke-width="0.9"><path d="M649 459.5A4 4 0 0 1 657 459.5"/><path d="M657 462A4 4 0 0 1 649 462"/></g>
<rect x="95.3" y="1.9" width="8.9" height="8.9" rx="1.6" fill="#fbfdf8"/>
<path d="M95.6 8.2L100.8 2.1" stroke="#5a78e8" stroke-width="1.6"/>
<path d="M98.3 9.2L99.4 5.0C99.8 3.9 100.6 3.9 101.6 4.4C102.6 5.0 102.3 6.3 101.2 6.6L99.6 7.0" fill="none" stroke="#64ac30" stroke-width="1.3"/>
<g stroke="#eef5ea" stroke-width="1.1" fill="none"><path d="M773 6.2H779"/><rect x="799.6" y="4.6" width="4.6" height="4.4" rx="1"/><path d="M801 3.5H805.2V7.6"/><path d="M826.4 3.2L832.6 9.2M832.6 3.2L826.4 9.2"/></g>
<g stroke="#eef5ea" stroke-width="1.1" fill="none"><path d="M802.2 17.3L804 18.6L805.4 22.4H810.2L811 19.2H804.6"/><circle cx="806.2" cy="24" r="0.7" fill="#eef5ea"/><circle cx="809.4" cy="24" r="0.7" fill="#eef5ea"/><path d="M833.2 22.8L836.1 19.9L839 22.8"/></g>
<text x="818.8" y="24.6" font-size="9" fill="#eef5ea" stroke="#eef5ea" stroke-width="0.3" font-family="Liberation Sans">?</text>
<rect x="102.7" y="35.6" width="16.6" height="16.8" fill="#fff" stroke="#8c8c8c" stroke-width="1"/>
<rect x="104" y="37" width="2.6" height="2.5" fill="#c8c8c8"/><rect x="108.3" y="37" width="9.5" height="2.7" fill="#a8a8a8"/><rect x="104" y="41" width="2.6" height="10" fill="#b0b0b0"/>
<path d="M108.2 41.6H112.5M108.2 43H112.5M108.2 44.4H112" stroke="#6aa0d8" stroke-width="0.8"/>
<path d="M110 49.6Q115.6 49.6 116 43.4" fill="none" stroke="#2a78c0" stroke-width="1.3"/><path d="M114.2 44.2L116 41.6L117.8 44.2Z M111.2 48L108.6 49.6L111.2 51.2Z" fill="#2a78c0"/>
<path d="M133.6 35.6H150.6V51.4H138L136 52.6H133.6Z" fill="#fff" stroke="#8e8e8e" stroke-width="1"/>
<path d="M134 38.8H150.2M134 41.8H150.2M134 44.8H150.2M134 47.8H150.2M138.6 36V51.4M145.2 36V51.4" stroke="#c6c6c6" stroke-width="0.7"/>
<path d="M133.8 49.6H138.4L136.6 52.4H133.8Z" fill="#c8c8c8"/>
<rect x="170.6" y="35.6" width="17.0" height="16.799999999999997" fill="#fff"/>
<path d="M172.2 36.2H186.0M172.2 51.8H186.0M171.2 37.2V50.8M187.0 37.2V50.8" stroke="#bdbdbd" stroke-width="1.1"/>
<circle cx="171.2" cy="36.2" r="1.05" fill="#4a8ef2"/>
<circle cx="187.0" cy="36.2" r="1.05" fill="#4a8ef2"/>
<circle cx="171.2" cy="51.8" r="1.05" fill="#4a8ef2"/>
<circle cx="187.0" cy="51.8" r="1.05" fill="#4a8ef2"/>
<path d="M171.4 51.6V47.4L175.6 42.4L179.4 46.8L181.6 44.6L186.8 50V51.6Z" fill="#8fdc62"/><path d="M179.4 46.8L181.6 44.6L186.8 50V51.6H183.4Z" fill="#72c248"/>
<circle cx="181.6" cy="40.3" r="1.7" fill="#ffb524"/>
<rect x="204.0" y="35.6" width="16.599999999999994" height="16.799999999999997" fill="#fff"/>
<path d="M205.6 36.2H219.0M205.6 51.8H219.0M204.6 37.2V50.8M220.0 37.2V50.8" stroke="#bdbdbd" stroke-width="1.1"/>
<circle cx="204.6" cy="36.2" r="1.05" fill="#4a8ef2"/>
<circle cx="220.0" cy="36.2" r="1.05" fill="#4a8ef2"/>
<circle cx="204.6" cy="51.8" r="1.05" fill="#4a8ef2"/>
<circle cx="220.0" cy="51.8" r="1.05" fill="#4a8ef2"/>
<text x="206.6" y="44.4" font-size="7.8" fill="#2f74c0" stroke="#2f74c0" stroke-width="0.2" font-family="Liberation Sans">A</text>
<path d="M213.2 38.4H218.6M213.2 40.4H218.6M213.2 42.4H218.6M213.2 44.4H218.6M206 46.6H218.6M206 48.6H218.6M206 50.4H218.6" stroke="#dadada" stroke-width="0.8"/>
<rect x="237.3" y="35.6" width="17.19999999999999" height="16.799999999999997" fill="#fff"/>
<path d="M238.9 36.2H252.9M238.9 51.8H252.9M237.9 37.2V50.8M253.9 37.2V50.8" stroke="#bdbdbd" stroke-width="1.1"/>
<circle cx="237.9" cy="36.2" r="1.05" fill="#4a8ef2"/>
<circle cx="253.9" cy="36.2" r="1.05" fill="#4a8ef2"/>
<circle cx="237.9" cy="51.8" r="1.05" fill="#4a8ef2"/>
<circle cx="253.9" cy="51.8" r="1.05" fill="#4a8ef2"/>
<rect x="242.1" y="44.8" width="1.5" height="4.4" fill="#f0a030"/><rect x="244.7" y="42.2" width="1.6" height="7" fill="#4a8ef0"/><rect x="247.9" y="40" width="1.6" height="9.2" fill="#8a8a8a"/>
<g fill="#fff" stroke="#8a8a8a" stroke-width="1"><circle cx="281.6" cy="39.8" r="4.6"/><rect x="279.4" y="44.6" width="10.6" height="7.8" rx="0.8"/><path d="M283.4 41.6H289.2V39.3L294.2 43.1L289.2 46.9V44.6H283.4Z"/></g>
<path d="M314.8 50.3L330.5 35.6L331.9 37.0L316.2 51.7Z" fill="#fff" stroke="#8e8e8e" stroke-width="0.9"/>
<defs><linearGradient id="ta" x1="0" y1="0" x2="0" y2="1"><stop offset="0" stop-color="#3aa0e8"/><stop offset="1" stop-color="#1c7cd0"/></linearGradient></defs>
<path d="M348.4 51.3L353.2 36.2H356.4L361.2 51.3H358.2L357.1 47.6H352.4L351.3 51.3Z M353.1 45.0H356.3L354.7 39.4Z" fill="url(#ta)" fill-rule="evenodd"/>
<rect x="373.4" y="34.2" width="9.4" height="8.8" fill="#f8f8f8" stroke="#b8b8b8" stroke-width="0.7"/>
<text x="374.6" y="40.6" font-size="3.6" fill="#777" font-family="Liberation Sans" textLength="7" lengthAdjust="spacingAndGlyphs">OLE</text>
<circle cx="373.4" cy="34.2" r="0.8" fill="#5a96f0"/>
<circle cx="382.8" cy="34.2" r="0.8" fill="#5a96f0"/>
<circle cx="373.4" cy="43" r="0.8" fill="#5a96f0"/>
<circle cx="382.8" cy="43" r="0.8" fill="#5a96f0"/>
<circle cx="474.8" cy="43" r="7.6" fill="#ececec" stroke="#bcbcbc" stroke-width="0.5"/>
<g fill="#a2a2a2"><path d="M467.6 41.6Q468.6 37 473.4 35.8L475.4 37.6L473 39.6L474 42.6L471.2 45.2L468.2 44.2Z"/><path d="M477 36.4Q481.6 38 482.4 43.4L481 46.4L478.8 44.6L479.4 41.6L476.6 39.4Z"/><path d="M470.4 46.2L474.8 47.2L473.4 49Q470.8 48.4 469.6 47Z"/></g>
<g fill="none" stroke="#2a72bc" stroke-width="1.6"><rect x="470.8" y="48.3" width="5.2" height="3.3" rx="1.65"/><rect x="478.4" y="48.3" width="5.2" height="3.3" rx="1.65"/><path d="M475 50H479.4"/></g>
<path d="M513.2 37.4H526.8Q528.6 37.4 528.6 39.2V47.6Q528.6 49.4 526.8 49.4H518.2L515.4 52.4V49.4H513.2Q511.4 49.4 511.4 47.6V39.2Q511.4 37.4 513.2 37.4Z" fill="#fff" stroke="#8e8e8e" stroke-width="0.9"/>
<path d="M508.2 43.3H514.2M511.2 40.3V46.3" stroke="#2f7cc8" stroke-width="1.3"/>
<path d="M553.4 35.4H563.4L566.6 38.6V52.6H553.4Z" fill="#fff" stroke="#8a8a8a" stroke-width="0.9"/>
<path d="M563.4 35.4V38.6H566.6" fill="none" stroke="#8a8a8a" stroke-width="0.7"/>
<rect x="555.2" y="37.6" width="6.4" height="1.5" fill="#ff7a50"/><rect x="555.2" y="49.3" width="9.8" height="1.6" fill="#ff7a50"/>
<path d="M555.2 41.4H565M555.2 43.6H565M555.2 45.8H565" stroke="#e4e4e4" stroke-width="0.7"/>
<rect x="578.6" y="38.4" width="10" height="10.4" rx="1.6" fill="#fafafa" stroke="#8e8e8e" stroke-width="1"/>
<path d="M579.4 46.8H587.8" stroke="#c8c8c8" stroke-width="1"/>
<rect x="578.6" y="58.0" width="10" height="10.4" rx="1.6" fill="#fafafa" stroke="#8e8e8e" stroke-width="1"/>
<path d="M579.4 66.4H587.8" stroke="#c8c8c8" stroke-width="1"/>
<text x="581.2" y="46.6" font-size="8" fill="#2f7cc8" font-family="Liberation Serif">λ</text>
<path d="M581 62.9H586.2" stroke="#2f7cc8" stroke-width="1.1"/>
<path d="M101 110.4H108.2M101 112H108.2M101 113.6H108.2M101 115.2H108.2M101 116.8H108.2M101 118.4H108.2" stroke="#9a9a9a" stroke-width="0.9"/>
<path d="M118 110.6L119.8 111.6L121.2 116H126.4L127.8 112H120.4" fill="none" stroke="#8c8c8c" stroke-width="0.9"/><circle cx="122" cy="117.6" r="0.8" fill="#2f7cc8"/><circle cx="125.6" cy="117.6" r="0.8" fill="#2f7cc8"/>
<circle cx="139.6" cy="111.2" r="1.8" fill="#a8c8f0"/>
<path d="M139.2 117.4V111.4Q139.2 110.4 140.1 110.4Q141 110.4 141 111.4V114.2L143.6 114.8Q145 115.2 145 116.6V118.2Q144.6 119.8 142.6 119.8H140.6Q139.4 119.8 138.4 118.6L137 116.8Q136.8 115.8 137.8 115.8Z" fill="#fff" stroke="#8a8a8a" stroke-width="0.8"/>
<path d="M155.6 110.4H160.4L162.8 112.8V119H155.6Z" fill="#fff" stroke="#9a9a9a" stroke-width="0.8"/>
<path d="M168.6 113.0H172.4L170.5 115.19999999999999Z" fill="#222"/>
<path d="M177.8 111.2H181.4L182.6 112.4H187.4V118.2H177.8Z" fill="#f7c46a" stroke="#d9a040" stroke-width="0.6"/><path d="M177.8 118.2L179.6 114.4H188.6L187 118.2Z" fill="#fdd88a" stroke="#d9a040" stroke-width="0.6"/>
<path d="M192.4 113.0H196.20000000000002L194.3 115.19999999999999Z" fill="#222"/>
<rect x="206.4" y="110" width="9.2" height="8.4" rx="0.8" fill="#4a80d8"/><rect x="208.2" y="110.6" width="5.4" height="2.8" fill="#d8e6f8"/><rect x="208" y="115" width="5.8" height="3.4" fill="#b8d0f0"/>
<path d="M226 111.6V114.6H229" fill="none" stroke="#2f7cc8" stroke-width="1.1"/><path d="M226.4 114.2Q229 111 231.2 112.6Q233.4 114.8 229.6 118.8" fill="none" stroke="#2f7cc8" stroke-width="1.2"/>
<path d="M237.5 113.0H241.3L239.4 115.19999999999999Z" fill="#222"/>
<path d="M254.8 111.6V114.6H251.8" fill="none" stroke="#c4c4c4" stroke-width="1"/><path d="M254.4 114.2Q251.8 111 249.6 112.6Q247.4 114.8 251.2 118.8" fill="none" stroke="#c4c4c4" stroke-width="1.1"/>
<path d="M261.0 113.0H264.79999999999995L262.9 115.19999999999999Z" fill="#8a8a8a"/>
<path d="M279.6 112.6A4.2 4.2 0 1 0 280.2 116.2" fill="none" stroke="#c0c0c0" stroke-width="1"/><path d="M278 114L280.8 114.6L281 111.8" fill="none" stroke="#c0c0c0" stroke-width="0.9"/>
<path d="M290.6 110.2V118L292.6 116.4L294 119.2L295.2 118.6L294 115.8L296.6 115.6Z" fill="#fff" stroke="#8a8a8a" stroke-width="0.8"/>
<path d="M302 110.2L304.2 111.8L302 113.4M304.4 110.2L306.6 111.8L304.4 113.4" fill="none" stroke="#9a9a9a" stroke-width="0.7"/>
<path d="M831.8 127.6L833.8 125L835.8 127.6Z" fill="#555"/>
<path d="M833.8 132.6V225.6" stroke="#8c8c8c" stroke-width="3.2" stroke-linecap="round"/>
<rect x="839.3" y="275.5" width="4.4" height="23" rx="2.2" fill="#fff" stroke="#a8a8a8" stroke-width="0.8"/><path d="M842.2 285.4L840.8 287L842.2 288.6" fill="none" stroke="#888" stroke-width="0.6"/>
<path d="M832 411.8H835.6L833.8 414Z" fill="#555"/>
<path d="M832.6 421.4H835M832.6 422.8H835M832.6 424.2H835M833.8 420.6V425" stroke="#666" stroke-width="0.6"/>
<circle cx="833.8" cy="431" r="1.4" fill="#e01010"/>
<path d="M832.6 437.4H835M832.6 438.8H835M832.6 440.2H835M833.8 436.6V441" stroke="#666" stroke-width="0.6"/>
<path d="M832.4 444.2V450.6M832.4 444.6H837.8M834 446L837 449" fill="none" stroke="#555" stroke-width="0.7"/>
<defs><clipPath id="r22"><rect x="94" y="435.6" width="16" height="4.4"/></clipPath></defs>
<text x="102" y="441.9" font-size="5.8" fill="#222" stroke="#222" stroke-width="0.12" font-family="Liberation Sans" text-anchor="middle" clip-path="url(#r22)">22</text>

<defs>
<linearGradient id="gy" x1="0" y1="0" x2="0" y2="1"><stop offset="0" stop-color="#f8cc00"/><stop offset="0.3" stop-color="#e8ac08" stop-opacity="0.92"/><stop offset="0.5" stop-color="#ec9a14" stop-opacity="0.74"/><stop offset="1" stop-color="#9a4a0c" stop-opacity="0.48"/></linearGradient>
<linearGradient id="gg" x1="0" y1="0" x2="0" y2="1"><stop offset="0" stop-color="#a8f830"/><stop offset="0.5" stop-color="#4dd595" stop-opacity="0.75"/><stop offset="1" stop-color="#1a8cff" stop-opacity="0.58"/></linearGradient>
<linearGradient id="gm" x1="0" y1="0" x2="0" y2="1"><stop offset="0" stop-color="#ff3898"/><stop offset="0.25" stop-color="#d8359a" stop-opacity="0.95"/><stop offset="0.55" stop-color="#d037b7" stop-opacity="0.6"/><stop offset="1" stop-color="#9128af" stop-opacity="0.4"/></linearGradient>
<linearGradient id="gc" x1="0" y1="0" x2="0" y2="1"><stop offset="0" stop-color="#38f0ff"/><stop offset="0.5" stop-color="#23b0e3" stop-opacity="0.75"/><stop offset="1" stop-color="#125483" stop-opacity="0.55"/></linearGradient>
<linearGradient id="sg" x1="0" y1="0" x2="0" y2="1"><stop offset="0" stop-color="#a0f030"/><stop offset="1" stop-color="#1a70b0"/></linearGradient>
<linearGradient id="sm" x1="0" y1="0" x2="0" y2="1"><stop offset="0" stop-color="#ff40a0"/><stop offset="1" stop-color="#5a1868"/></linearGradient>
<linearGradient id="sc" x1="0" y1="0" x2="0" y2="1"><stop offset="0" stop-color="#38e8ff"/><stop offset="1" stop-color="#1070a0"/></linearGradient>
<linearGradient id="sy" x1="0" y1="0" x2="0" y2="1"><stop offset="0" stop-color="#f8c800"/><stop offset="1" stop-color="#a05a10"/></linearGradient>
</defs>
<g stroke="#646464" stroke-width="1.3" fill="none">
<path d="M292 193H721.5M292 236H721.5M292 279H721.5M292 322H721.5M292 365H721.5M292 407.6H721.5"/>
<path d="M716.7 193V407.6"/>
</g>
<path d="M397.5 407.6L468.5 307.5L539.2 407.6Z" fill="url(#gg)"/>
<path d="M468.5 407.6L539.5 253L609.5 407.6Z" fill="url(#gm)"/>
<path d="M539.2 407.6L610 200L680.5 407.6Z" fill="url(#gc)"/>
<path d="M327 407.6L397.5 228L468 407.6Z" fill="url(#gy)"/>
<text x="451.8" y="166.4" fill="#fff" stroke="#fff" stroke-width="0.6" font-family="Liberation Sans" font-weight="bold" font-size="18.4" textLength="186.2" lengthAdjust="spacingAndGlyphs">Sales of all branches</text>
<g fill="#f0f0f0" font-family="Liberation Sans" font-size="16.4">
<text x="728.2" y="201.1" textLength="60" lengthAdjust="spacingAndGlyphs">2500000</text>
<text x="728.2" y="244.1" textLength="60" lengthAdjust="spacingAndGlyphs">2000000</text>
<text x="728.2" y="287.2" textLength="60" lengthAdjust="spacingAndGlyphs">1500000</text>
<text x="728.2" y="330.2" textLength="60" lengthAdjust="spacingAndGlyphs">1000000</text>
<text x="728.2" y="373.0" textLength="51.4" lengthAdjust="spacingAndGlyphs">500000</text>
<text x="728.2" y="415.6" textLength="8.6" lengthAdjust="spacingAndGlyphs">0</text>
</g>
<rect x="430.1" y="423.9" width="6.5" height="6.4" fill="url(#sg)"/>
<rect x="493.6" y="423.9" width="6.5" height="6.4" fill="url(#sm)"/>
<rect x="557" y="423.9" width="6.5" height="6.4" fill="url(#sc)"/>
<rect x="620.4" y="423.9" width="6.5" height="6.4" fill="url(#sy)"/>
<g fill="#e8e8e8" font-family="Liberation Sans" font-size="9.6">
<text x="437.8" y="430.5" textLength="21.8" lengthAdjust="spacingAndGlyphs">cw 21</text>
<text x="501.3" y="430.5" textLength="21.8" lengthAdjust="spacingAndGlyphs">cw 22</text>
<text x="564.7" y="430.5" textLength="21.8" lengthAdjust="spacingAndGlyphs">cw 23</text>
<text x="628.1" y="430.5" textLength="21.8" lengthAdjust="spacingAndGlyphs">cw 20</text>
</g>

<g>
<text x="129.4" y="181.1" font-size="11.4" fill="#ffffff" font-weight="bold" font-family="Liberation Sans" textLength="33.9" lengthAdjust="spacingAndGlyphs" stroke="#ffffff" stroke-width="0.45">CW 20</text>
<text x="179.7" y="180.2" font-size="9.0" fill="#ffffff" font-weight="bold" font-family="Liberation Sans" textLength="18.4" lengthAdjust="spacingAndGlyphs" stroke="#ffffff" stroke-width="0.3">B-01</text>
<text x="207.6" y="180.2" font-size="9.0" fill="#ffffff" font-weight="bold" font-family="Liberation Sans" textLength="18.4" lengthAdjust="spacingAndGlyphs" stroke="#ffffff" stroke-width="0.3">B-02</text>
<text x="235.2" y="180.2" font-size="9.0" fill="#ffffff" font-weight="bold" font-family="Liberation Sans" textLength="18.4" lengthAdjust="spacingAndGlyphs" stroke="#ffffff" stroke-width="0.3">B-03</text>
<text x="119.5" y="196.29999999999998" font-size="9.6" fill="#1a1a1a" font-weight="normal" font-family="Liberation Sans" textLength="27.2" lengthAdjust="spacingAndGlyphs" stroke="#1a1a1a" stroke-width="0.1">T-shirts</text>
<text x="177.6" y="196.29999999999998" font-size="9.8" fill="#1a1a1a" font-weight="normal" font-family="Liberation Sans" textLength="22.5" lengthAdjust="spacingAndGlyphs" stroke="#1a1a1a" stroke-width="0.1">15847</text>
<text x="205.5" y="196.29999999999998" font-size="9.8" fill="#1a1a1a" font-weight="normal" font-family="Liberation Sans" textLength="22.5" lengthAdjust="spacingAndGlyphs" stroke="#1a1a1a" stroke-width="0.1">14875</text>
<text x="233.1" y="196.29999999999998" font-size="9.8" fill="#1a1a1a" font-weight="normal" font-family="Liberation Sans" textLength="22.5" lengthAdjust="spacingAndGlyphs" stroke="#1a1a1a" stroke-width="0.1">20584</text>
<text x="119.5" y="212.0" font-size="9.6" fill="#1a1a1a" font-weight="normal" font-family="Liberation Sans" textLength="23.5" lengthAdjust="spacingAndGlyphs" stroke="#1a1a1a" stroke-width="0.1">Shoes</text>
<text x="177.6" y="212.0" font-size="9.8" fill="#1a1a1a" font-weight="normal" font-family="Liberation Sans" textLength="22.5" lengthAdjust="spacingAndGlyphs" stroke="#1a1a1a" stroke-width="0.1">69852</text>
<text x="205.5" y="212.0" font-size="9.8" fill="#1a1a1a" font-weight="normal" font-family="Liberation Sans" textLength="22.5" lengthAdjust="spacingAndGlyphs" stroke="#1a1a1a" stroke-width="0.1">55842</text>
<text x="233.1" y="212.0" font-size="9.8" fill="#1a1a1a" font-weight="normal" font-family="Liberation Sans" textLength="22.5" lengthAdjust="spacingAndGlyphs" stroke="#1a1a1a" stroke-width="0.1">89547</text>
<text x="119.5" y="226.79999999999998" font-size="9.6" fill="#1a1a1a" font-weight="normal" font-family="Liberation Sans" textLength="19.3" lengthAdjust="spacingAndGlyphs" stroke="#1a1a1a" stroke-width="0.1">Bags</text>
<text x="177.6" y="226.79999999999998" font-size="9.8" fill="#1a1a1a" font-weight="normal" font-family="Liberation Sans" textLength="22.5" lengthAdjust="spacingAndGlyphs" stroke="#1a1a1a" stroke-width="0.1">58753</text>
<text x="205.5" y="226.79999999999998" font-size="9.8" fill="#1a1a1a" font-weight="normal" font-family="Liberation Sans" textLength="22.5" lengthAdjust="spacingAndGlyphs" stroke="#1a1a1a" stroke-width="0.1">26547</text>
<text x="233.1" y="226.79999999999998" font-size="9.8" fill="#1a1a1a" font-weight="normal" font-family="Liberation Sans" textLength="22.5" lengthAdjust="spacingAndGlyphs" stroke="#1a1a1a" stroke-width="0.1">42587</text>
<text x="129.4" y="254.6" font-size="11.4" fill="#ffffff" font-weight="bold" font-family="Liberation Sans" textLength="33.9" lengthAdjust="spacingAndGlyphs" stroke="#ffffff" stroke-width="0.45">CW 21</text>
<text x="179.7" y="253.7" font-size="9.0" fill="#ffffff" font-weight="bold" font-family="Liberation Sans" textLength="18.4" lengthAdjust="spacingAndGlyphs" stroke="#ffffff" stroke-width="0.3">B-01</text>
<text x="207.6" y="253.7" font-size="9.0" fill="#ffffff" font-weight="bold" font-family="Liberation Sans" textLength="18.4" lengthAdjust="spacingAndGlyphs" stroke="#ffffff" stroke-width="0.3">B-02</text>
<text x="235.2" y="253.7" font-size="9.0" fill="#ffffff" font-weight="bold" font-family="Liberation Sans" textLength="18.4" lengthAdjust="spacingAndGlyphs" stroke="#ffffff" stroke-width="0.3">B-03</text>
<text x="119.5" y="268.1" font-size="9.6" fill="#1a1a1a" font-weight="normal" font-family="Liberation Sans" textLength="27.2" lengthAdjust="spacingAndGlyphs" stroke="#1a1a1a" stroke-width="0.1">T-shirts</text>
<text x="177.6" y="268.1" font-size="9.8" fill="#1a1a1a" font-weight="normal" font-family="Liberation Sans" textLength="22.5" lengthAdjust="spacingAndGlyphs" stroke="#1a1a1a" stroke-width="0.1">25486</text>
<text x="205.5" y="268.1" font-size="9.8" fill="#1a1a1a" font-weight="normal" font-family="Liberation Sans" textLength="22.5" lengthAdjust="spacingAndGlyphs" stroke="#1a1a1a" stroke-width="0.1">29654</text>
<text x="233.1" y="268.1" font-size="9.8" fill="#1a1a1a" font-weight="normal" font-family="Liberation Sans" textLength="22.5" lengthAdjust="spacingAndGlyphs" stroke="#1a1a1a" stroke-width="0.1">29254</text>
<text x="119.5" y="281.70000000000005" font-size="9.6" fill="#1a1a1a" font-weight="normal" font-family="Liberation Sans" textLength="23.5" lengthAdjust="spacingAndGlyphs" stroke="#1a1a1a" stroke-width="0.1">Shoes</text>
<text x="177.6" y="281.70000000000005" font-size="9.8" fill="#1a1a1a" font-weight="normal" font-family="Liberation Sans" textLength="22.5" lengthAdjust="spacingAndGlyphs" stroke="#1a1a1a" stroke-width="0.1">75312</text>
<text x="205.5" y="281.70000000000005" font-size="9.8" fill="#1a1a1a" font-weight="normal" font-family="Liberation Sans" textLength="22.5" lengthAdjust="spacingAndGlyphs" stroke="#1a1a1a" stroke-width="0.1">59852</text>
<text x="233.1" y="281.70000000000005" font-size="9.8" fill="#1a1a1a" font-weight="normal" font-family="Liberation Sans" textLength="22.5" lengthAdjust="spacingAndGlyphs" stroke="#1a1a1a" stroke-width="0.1">99582</text>
<text x="119.5" y="295.3" font-size="9.6" fill="#1a1a1a" font-weight="normal" font-family="Liberation Sans" textLength="19.3" lengthAdjust="spacingAndGlyphs" stroke="#1a1a1a" stroke-width="0.1">Bags</text>
<text x="177.6" y="295.3" font-size="9.8" fill="#1a1a1a" font-weight="normal" font-family="Liberation Sans" textLength="22.5" lengthAdjust="spacingAndGlyphs" stroke="#1a1a1a" stroke-width="0.1">25482</text>
<text x="205.5" y="295.3" font-size="9.8" fill="#1a1a1a" font-weight="normal" font-family="Liberation Sans" textLength="22.5" lengthAdjust="spacingAndGlyphs" stroke="#1a1a1a" stroke-width="0.1">47521</text>
<text x="233.1" y="295.3" font-size="9.8" fill="#1a1a1a" font-weight="normal" font-family="Liberation Sans" textLength="22.5" lengthAdjust="spacingAndGlyphs" stroke="#1a1a1a" stroke-width="0.1">23654</text>
<text x="129.4" y="322.0" font-size="11.4" fill="#ffffff" font-weight="bold" font-family="Liberation Sans" textLength="33.9" lengthAdjust="spacingAndGlyphs" stroke="#ffffff" stroke-width="0.45">CW 22</text>
<text x="179.7" y="321.09999999999997" font-size="9.0" fill="#ffffff" font-weight="bold" font-family="Liberation Sans" textLength="18.4" lengthAdjust="spacingAndGlyphs" stroke="#ffffff" stroke-width="0.3">B-01</text>
<text x="207.6" y="321.09999999999997" font-size="9.0" fill="#ffffff" font-weight="bold" font-family="Liberation Sans" textLength="18.4" lengthAdjust="spacingAndGlyphs" stroke="#ffffff" stroke-width="0.3">B-02</text>
<text x="235.2" y="321.09999999999997" font-size="9.0" fill="#ffffff" font-weight="bold" font-family="Liberation Sans" textLength="18.4" lengthAdjust="spacingAndGlyphs" stroke="#ffffff" stroke-width="0.3">B-03</text>
<text x="119.5" y="336.0" font-size="9.6" fill="#1a1a1a" font-weight="normal" font-family="Liberation Sans" textLength="27.2" lengthAdjust="spacingAndGlyphs" stroke="#1a1a1a" stroke-width="0.1">T-shirts</text>
<text x="177.6" y="336.0" font-size="9.8" fill="#1a1a1a" font-weight="normal" font-family="Liberation Sans" textLength="22.5" lengthAdjust="spacingAndGlyphs" stroke="#1a1a1a" stroke-width="0.1">36965</text>
<text x="205.5" y="336.0" font-size="9.8" fill="#1a1a1a" font-weight="normal" font-family="Liberation Sans" textLength="22.5" lengthAdjust="spacingAndGlyphs" stroke="#1a1a1a" stroke-width="0.1">42158</text>
<text x="233.1" y="336.0" font-size="9.8" fill="#1a1a1a" font-weight="normal" font-family="Liberation Sans" textLength="22.5" lengthAdjust="spacingAndGlyphs" stroke="#1a1a1a" stroke-width="0.1">25254</text>
<text x="119.5" y="349.5" font-size="9.6" fill="#1a1a1a" font-weight="normal" font-family="Liberation Sans" textLength="23.5" lengthAdjust="spacingAndGlyphs" stroke="#1a1a1a" stroke-width="0.1">Shoes</text>
<text x="177.6" y="349.5" font-size="9.8" fill="#1a1a1a" font-weight="normal" font-family="Liberation Sans" textLength="22.5" lengthAdjust="spacingAndGlyphs" stroke="#1a1a1a" stroke-width="0.1">48583</text>
<text x="205.5" y="349.5" font-size="9.8" fill="#1a1a1a" font-weight="normal" font-family="Liberation Sans" textLength="22.5" lengthAdjust="spacingAndGlyphs" stroke="#1a1a1a" stroke-width="0.1">62421</text>
<text x="233.1" y="349.5" font-size="9.8" fill="#1a1a1a" font-weight="normal" font-family="Liberation Sans" textLength="22.5" lengthAdjust="spacingAndGlyphs" stroke="#1a1a1a" stroke-width="0.1">50236</text>
<text x="119.5" y="363.3" font-size="9.6" fill="#1a1a1a" font-weight="normal" font-family="Liberation Sans" textLength="19.3" lengthAdjust="spacingAndGlyphs" stroke="#1a1a1a" stroke-width="0.1">Bags</text>
<text x="177.6" y="363.3" font-size="9.8" fill="#1a1a1a" font-weight="normal" font-family="Liberation Sans" textLength="22.5" lengthAdjust="spacingAndGlyphs" stroke="#1a1a1a" stroke-width="0.1">89547</text>
<text x="205.5" y="363.3" font-size="9.8" fill="#1a1a1a" font-weight="normal" font-family="Liberation Sans" textLength="22.5" lengthAdjust="spacingAndGlyphs" stroke="#1a1a1a" stroke-width="0.1">75312</text>
<text x="233.1" y="363.3" font-size="9.8" fill="#1a1a1a" font-weight="normal" font-family="Liberation Sans" textLength="22.5" lengthAdjust="spacingAndGlyphs" stroke="#1a1a1a" stroke-width="0.1">59852</text>
<text x="129.4" y="390.3" font-size="11.4" fill="#ffffff" font-weight="bold" font-family="Liberation Sans" textLength="33.9" lengthAdjust="spacingAndGlyphs" stroke="#ffffff" stroke-width="0.45">CW 23</text>
<text x="179.7" y="389.4" font-size="9.0" fill="#ffffff" font-weight="bold" font-family="Liberation Sans" textLength="18.4" lengthAdjust="spacingAndGlyphs" stroke="#ffffff" stroke-width="0.3">B-01</text>
<text x="207.6" y="389.4" font-size="9.0" fill="#ffffff" font-weight="bold" font-family="Liberation Sans" textLength="18.4" lengthAdjust="spacingAndGlyphs" stroke="#ffffff" stroke-width="0.3">B-02</text>
<text x="235.2" y="389.4" font-size="9.0" fill="#ffffff" font-weight="bold" font-family="Liberation Sans" textLength="18.4" lengthAdjust="spacingAndGlyphs" stroke="#ffffff" stroke-width="0.3">B-03</text>
<text x="119.5" y="404.6" font-size="9.6" fill="#1a1a1a" font-weight="normal" font-family="Liberation Sans" textLength="27.2" lengthAdjust="spacingAndGlyphs" stroke="#1a1a1a" stroke-width="0.1">T-shirts</text>
<text x="177.6" y="404.6" font-size="9.8" fill="#1a1a1a" font-weight="normal" font-family="Liberation Sans" textLength="22.5" lengthAdjust="spacingAndGlyphs" stroke="#1a1a1a" stroke-width="0.1">58426</text>
<text x="205.5" y="404.6" font-size="9.8" fill="#1a1a1a" font-weight="normal" font-family="Liberation Sans" textLength="22.5" lengthAdjust="spacingAndGlyphs" stroke="#1a1a1a" stroke-width="0.1">44785</text>
<text x="233.1" y="404.6" font-size="9.8" fill="#1a1a1a" font-weight="normal" font-family="Liberation Sans" textLength="22.5" lengthAdjust="spacingAndGlyphs" stroke="#1a1a1a" stroke-width="0.1">63258</text>
<text x="119.5" y="417.70000000000005" font-size="9.6" fill="#1a1a1a" font-weight="normal" font-family="Liberation Sans" textLength="23.5" lengthAdjust="spacingAndGlyphs" stroke="#1a1a1a" stroke-width="0.1">Shoes</text>
<text x="177.6" y="417.70000000000005" font-size="9.8" fill="#1a1a1a" font-weight="normal" font-family="Liberation Sans" textLength="22.5" lengthAdjust="spacingAndGlyphs" stroke="#1a1a1a" stroke-width="0.1">48752</text>
<text x="205.5" y="417.70000000000005" font-size="9.8" fill="#1a1a1a" font-weight="normal" font-family="Liberation Sans" textLength="22.5" lengthAdjust="spacingAndGlyphs" stroke="#1a1a1a" stroke-width="0.1">46832</text>
<text x="233.1" y="417.70000000000005" font-size="9.8" fill="#1a1a1a" font-weight="normal" font-family="Liberation Sans" textLength="22.5" lengthAdjust="spacingAndGlyphs" stroke="#1a1a1a" stroke-width="0.1">95254</text>
<text x="119.5" y="431.3" font-size="9.6" fill="#1a1a1a" font-weight="normal" font-family="Liberation Sans" textLength="19.3" lengthAdjust="spacingAndGlyphs" stroke="#1a1a1a" stroke-width="0.1">Bags</text>
<text x="177.6" y="431.3" font-size="9.8" fill="#1a1a1a" font-weight="normal" font-family="Liberation Sans" textLength="22.5" lengthAdjust="spacingAndGlyphs" stroke="#1a1a1a" stroke-width="0.1">58432</text>
<text x="205.5" y="431.3" font-size="9.8" fill="#1a1a1a" font-weight="normal" font-family="Liberation Sans" textLength="22.5" lengthAdjust="spacingAndGlyphs" stroke="#1a1a1a" stroke-width="0.1">95424</text>
<text x="233.1" y="431.3" font-size="9.8" fill="#1a1a1a" font-weight="normal" font-family="Liberation Sans" textLength="22.5" lengthAdjust="spacingAndGlyphs" stroke="#1a1a1a" stroke-width="0.1">45715</text>
<text x="123.8" y="154.0" font-size="11.1" fill="#111111" font-weight="bold" font-family="Liberation Sans" textLength="126.8" lengthAdjust="spacingAndGlyphs" stroke="#111111" stroke-width="0.05">Sales per calendar week</text>
<text x="107.8" y="9.6" font-size="8.2" fill="#f2f7ef" font-weight="normal" font-family="Liberation Sans" textLength="90.5" lengthAdjust="spacingAndGlyphs">Sales figures.xlsx - PlanMaker</text>
<text x="101.7" y="24.1" font-size="7.8" fill="#f4f8f2" font-weight="normal" font-family="Liberation Sans" textLength="10.200000000000003" lengthAdjust="spacingAndGlyphs" stroke="#f4f8f2" stroke-width="0.05">File</text>
<text x="124" y="24.1" font-size="7.8" fill="#f4f8f2" font-weight="normal" font-family="Liberation Sans" textLength="19.099999999999994" lengthAdjust="spacingAndGlyphs" stroke="#f4f8f2" stroke-width="0.05">Home</text>
<text x="183.8" y="24.1" font-size="7.8" fill="#f4f8f2" font-weight="normal" font-family="Liberation Sans" textLength="21.0" lengthAdjust="spacingAndGlyphs" stroke="#f4f8f2" stroke-width="0.05">Layout</text>
<text x="216.3" y="24.1" font-size="7.8" fill="#f4f8f2" font-weight="normal" font-family="Liberation Sans" textLength="26.099999999999994" lengthAdjust="spacingAndGlyphs" stroke="#f4f8f2" stroke-width="0.05">Formula</text>
<text x="254" y="24.1" font-size="7.8" fill="#f4f8f2" font-weight="normal" font-family="Liberation Sans" textLength="14" lengthAdjust="spacingAndGlyphs" stroke="#f4f8f2" stroke-width="0.05">Data</text>
<text x="279.5" y="24.1" font-size="7.8" fill="#f4f8f2" font-weight="normal" font-family="Liberation Sans" textLength="22.30000000000001" lengthAdjust="spacingAndGlyphs" stroke="#f4f8f2" stroke-width="0.05">Review</text>
<text x="312.8" y="24.1" font-size="7.8" fill="#f4f8f2" font-weight="normal" font-family="Liberation Sans" textLength="15.300000000000011" lengthAdjust="spacingAndGlyphs" stroke="#f4f8f2" stroke-width="0.05">View</text>
<text x="154.9" y="24.1" font-size="7.6" fill="#4a7040" font-weight="normal" font-family="Liberation Sans" textLength="17.1" lengthAdjust="spacingAndGlyphs" stroke="#4a7040" stroke-width="0.22">Insert</text>
<text x="103.3" y="65.4" font-size="8.1" fill="#2e2e2e" font-weight="normal" font-family="Liberation Sans" textLength="16.10000000000001" lengthAdjust="spacingAndGlyphs">Pivot</text>
<text x="103.5" y="74.0" font-size="8.1" fill="#2e2e2e" font-weight="normal" font-family="Liberation Sans" textLength="15.299999999999997" lengthAdjust="spacingAndGlyphs">table</text>
<text x="133.1" y="65.4" font-size="8.1" fill="#2e2e2e" font-weight="normal" font-family="Liberation Sans" textLength="17.200000000000017" lengthAdjust="spacingAndGlyphs">Sheet</text>
<text x="116.4" y="86.0" font-size="8.1" fill="#2e2e2e" font-weight="normal" font-family="Liberation Sans" textLength="19.099999999999994" lengthAdjust="spacingAndGlyphs">Tables</text>
<text x="168.5" y="65.4" font-size="8.1" fill="#2e2e2e" font-weight="normal" font-family="Liberation Sans" textLength="21.69999999999999" lengthAdjust="spacingAndGlyphs">Picture</text>
<text x="165.9" y="74.0" font-size="8.1" fill="#2e2e2e" font-weight="normal" font-family="Liberation Sans" textLength="18.099999999999994" lengthAdjust="spacingAndGlyphs">frame</text>
<text x="205.8" y="65.4" font-size="8.1" fill="#2e2e2e" font-weight="normal" font-family="Liberation Sans" textLength="13.0" lengthAdjust="spacingAndGlyphs">Text</text>
<text x="203.2" y="74.0" font-size="8.1" fill="#2e2e2e" font-weight="normal" font-family="Liberation Sans" textLength="18.400000000000006" lengthAdjust="spacingAndGlyphs">frame</text>
<text x="237.8" y="65.4" font-size="8.1" fill="#2e2e2e" font-weight="normal" font-family="Liberation Sans" textLength="16.899999999999977" lengthAdjust="spacingAndGlyphs">Chart</text>
<text x="232.5" y="74.0" font-size="8.1" fill="#2e2e2e" font-weight="normal" font-family="Liberation Sans" textLength="18.099999999999994" lengthAdjust="spacingAndGlyphs">frame</text>
<text x="268.6" y="65.4" font-size="8.1" fill="#2e2e2e" font-weight="normal" font-family="Liberation Sans" textLength="34.0" lengthAdjust="spacingAndGlyphs">AutoShape</text>
<text x="315.0" y="65.4" font-size="8.1" fill="#2e2e2e" font-weight="normal" font-family="Liberation Sans" textLength="16.0" lengthAdjust="spacingAndGlyphs">Lines</text>
<text x="344.2" y="65.4" font-size="8.1" fill="#2e2e2e" font-weight="normal" font-family="Liberation Sans" textLength="21.900000000000034" lengthAdjust="spacingAndGlyphs">TextArt</text>
<text x="345.7" y="74.0" font-size="8.1" fill="#2e2e2e" font-weight="normal" font-family="Liberation Sans" textLength="18.900000000000034" lengthAdjust="spacingAndGlyphs">object</text>
<text x="386.6" y="40.9" font-size="8.1" fill="#2e2e2e" font-weight="normal" font-family="Liberation Sans" textLength="53.099999999999966" lengthAdjust="spacingAndGlyphs">OLE object frame</text>
<text x="293.7" y="86.0" font-size="8.1" fill="#2e2e2e" font-weight="normal" font-family="Liberation Sans" textLength="23.5" lengthAdjust="spacingAndGlyphs">Objects</text>
<text x="459.7" y="65.4" font-size="8.1" fill="#2e2e2e" font-weight="normal" font-family="Liberation Sans" textLength="29.900000000000034" lengthAdjust="spacingAndGlyphs">Hyperlink</text>
<text x="465.7" y="86.0" font-size="8.1" fill="#2e2e2e" font-weight="normal" font-family="Liberation Sans" textLength="16.400000000000034" lengthAdjust="spacingAndGlyphs">Links</text>
<text x="503.0" y="65.4" font-size="8.1" fill="#2e2e2e" font-weight="normal" font-family="Liberation Sans" textLength="31.299999999999955" lengthAdjust="spacingAndGlyphs">Comment</text>
<text x="501.2" y="86.0" font-size="8.1" fill="#2e2e2e" font-weight="normal" font-family="Liberation Sans" textLength="34.599999999999966" lengthAdjust="spacingAndGlyphs">Comments</text>
<text x="548.5" y="65.4" font-size="8.1" fill="#2e2e2e" font-weight="normal" font-family="Liberation Sans" textLength="22.399999999999977" lengthAdjust="spacingAndGlyphs">Header</text>
<text x="547.8" y="74.0" font-size="8.1" fill="#2e2e2e" font-weight="normal" font-family="Liberation Sans" textLength="23.800000000000068" lengthAdjust="spacingAndGlyphs">/ footer</text>
<text x="592.1" y="46.0" font-size="8.1" fill="#2e2e2e" font-weight="normal" font-family="Liberation Sans" textLength="23.399999999999977" lengthAdjust="spacingAndGlyphs">Symbol</text>
<text x="592.1" y="66.2" font-size="8.1" fill="#2e2e2e" font-weight="normal" font-family="Liberation Sans" textLength="30.100000000000023" lengthAdjust="spacingAndGlyphs">Character</text>
<text x="582.0" y="86.0" font-size="8.1" fill="#2e2e2e" font-weight="normal" font-family="Liberation Sans" textLength="12.200000000000045" lengthAdjust="spacingAndGlyphs">Text</text>
<text x="98.9" y="100.4" font-size="7.6" fill="#222" font-weight="normal" font-family="Liberation Sans" textLength="17.1" lengthAdjust="spacingAndGlyphs" stroke="#222" stroke-width="0.05">AD84</text>
<text x="155.2" y="100.9" font-size="10.5" fill="#555" font-weight="normal" font-family="Liberation Serif" font-style="italic" textLength="7.4" lengthAdjust="spacingAndGlyphs">fx</text>
<text x="147.7" y="448.8" font-size="7.6" fill="#1a1a1a" font-weight="bold" font-family="Liberation Sans" textLength="28.0" lengthAdjust="spacingAndGlyphs">Overview</text>
<text x="183.9" y="448.8" font-size="7.6" fill="#333" font-weight="normal" font-family="Liberation Sans" textLength="28.69999999999999" lengthAdjust="spacingAndGlyphs">Branch 01</text>
<text x="220.5" y="448.8" font-size="7.6" fill="#333" font-weight="normal" font-family="Liberation Sans" textLength="29.5" lengthAdjust="spacingAndGlyphs">Branch 02</text>
<text x="257.6" y="448.8" font-size="7.6" fill="#333" font-weight="normal" font-family="Liberation Sans" textLength="29.099999999999966" lengthAdjust="spacingAndGlyphs">Branch 03</text>
<text x="668.7" y="462.8" font-size="7.8" fill="#333" font-weight="normal" font-family="Liberation Sans" textLength="9.1" lengthAdjust="spacingAndGlyphs">Ins</text>
<text x="691.6" y="462.8" font-size="7.8" fill="#333" font-weight="normal" font-family="Liberation Sans" textLength="18.2" lengthAdjust="spacingAndGlyphs">AUTO</text>
<text x="809.8" y="463.0" font-size="7.8" fill="#222" font-weight="normal" font-family="Liberation Sans" textLength="16.4" lengthAdjust="spacingAndGlyphs">100%</text>
</g>
</svg>
</body></html>
